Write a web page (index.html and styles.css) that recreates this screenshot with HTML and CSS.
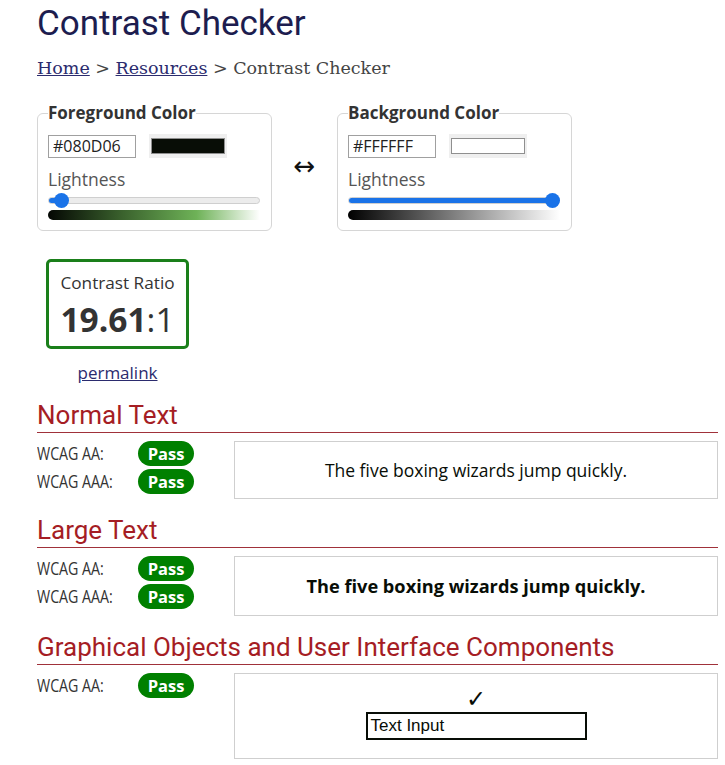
FILE: index.html
```html
<!DOCTYPE html>
<html lang="en">
<head>
<meta charset="utf-8">
<title>Contrast Checker</title>
<link rel="stylesheet" href="styles.css">
</head>
<body>
<main class="page">
  <h1 class="title">Contrast Checker</h1>
  <nav class="crumbs"><a href="#">Home</a> &gt; <a href="#">Resources</a> &gt; Contrast Checker</nav>

  <div class="pickers">
    <fieldset class="picker">
      <legend>Foreground Color</legend>
      <div class="hexrow">
        <input class="hex" type="text" value="#080D06">
        <span class="swatch-btn"><span class="swatch fg-swatch"></span></span>
      </div>
      <div class="light-label">Lightness</div>
      <div class="slider">
        <div class="track"><div class="fill" style="width: 13px"></div></div>
        <div class="thumb" style="left: 6px"></div>
      </div>
      <div class="grad fg-grad"></div>
    </fieldset>
    <div class="swap">&harr;</div>
    <fieldset class="picker">
      <legend>Background Color</legend>
      <div class="hexrow">
        <input class="hex" type="text" value="#FFFFFF">
        <span class="swatch-btn"><span class="swatch bg-swatch"></span></span>
      </div>
      <div class="light-label">Lightness</div>
      <div class="slider">
        <div class="track"><div class="fill" style="width: 100%"></div></div>
        <div class="thumb" style="left: 197px"></div>
      </div>
      <div class="grad bg-grad"></div>
    </fieldset>
  </div>

  <div class="ratio-col">
    <div class="ratio-box">
      <div class="ratio-label">Contrast Ratio</div>
      <div class="ratio-value"><b>19.61</b>:1</div>
    </div>
    <a class="permalink" href="#">permalink</a>
  </div>

  <section class="result">
    <h2>Normal Text</h2>
    <div class="result-row">
      <div class="levels">
        <div class="level"><span class="lvl-name">WCAG AA:</span><span class="pass">Pass</span></div>
        <div class="level"><span class="lvl-name">WCAG AAA:</span><span class="pass">Pass</span></div>
      </div>
      <div class="sample sample-normal">The five boxing wizards jump quickly.</div>
    </div>
  </section>

  <section class="result">
    <h2>Large Text</h2>
    <div class="result-row">
      <div class="levels">
        <div class="level"><span class="lvl-name">WCAG AA:</span><span class="pass">Pass</span></div>
        <div class="level"><span class="lvl-name">WCAG AAA:</span><span class="pass">Pass</span></div>
      </div>
      <div class="sample sample-large">The five boxing wizards jump quickly.</div>
    </div>
  </section>

  <section class="result">
    <h2>Graphical Objects and User Interface Components</h2>
    <div class="result-row">
      <div class="levels">
        <div class="level"><span class="lvl-name">WCAG AA:</span><span class="pass">Pass</span></div>
      </div>
      <div class="sample sample-ui">
        <div class="check">&#10003;</div>
        <div class="fake-input">Text Input</div>
      </div>
    </div>
  </section>
</main>
</body>
</html>
```

FILE: styles.css
```css
* { box-sizing: border-box; }

body {
  margin: 0;
  background: #ffffff;
  font-family: "Open Sans", "Liberation Sans", sans-serif;
  color: #333;
}

.page {
  padding: 0 7px 0 37px;
}

.title {
  margin: 0;
  padding-top: 4px;
  font-family: Roboto, "Liberation Sans", sans-serif;
  font-weight: 400;
  font-size: 35px;
  line-height: 40px;
  color: #1d1d4f;
}

.crumbs {
  margin-top: 13px;
  font-family: "DejaVu Serif", "Liberation Serif", serif;
  font-size: 17.5px;
  line-height: 22px;
  color: #444;
}
.crumbs a { color: #2b2b6e; }

.pickers {
  display: flex;
  align-items: center;
  margin-top: 22px;
}

.picker {
  width: 235px;
  margin: 0;
  padding: 9px 11px 10px 10px;
  border: 1px solid #d6d6d6;
  border-radius: 6px;
}
.picker legend {
  padding: 0;
  font-weight: 700;
  font-size: 17px;
  line-height: 24px;
  color: #333;
}

.hexrow {
  display: flex;
  align-items: center;
  gap: 13px;
}
.hex {
  width: 88px;
  height: 23px;
  margin: 0;
  padding: 0 4px;
  border: 1px solid #a0a0a0;
  font-family: "Open Sans", sans-serif;
  font-size: 16px;
  color: #222;
}
.swatch-btn {
  display: block;
  width: 78px;
  height: 24px;
  padding: 4px 2px;
  background: #efefef;
}
.swatch {
  display: block;
  width: 100%;
  height: 100%;
  border: 1px solid #8f8f8f;
}
.fg-swatch { background: #080D06; }
.bg-swatch { background: #FFFFFF; }

.light-label {
  margin-top: 9px;
  font-size: 17.5px;
  line-height: 24px;
  color: #555;
}

.slider {
  position: relative;
  height: 15px;
  margin-top: 2px;
}
.track {
  position: absolute;
  left: 0; right: 0; top: 4px;
  height: 7px;
  border-radius: 4px;
  background: #ececec;
  border: 1px solid #cfcfcf;
  overflow: hidden;
}
.fill {
  height: 100%;
  background: #1a73e8;
}
.thumb {
  position: absolute;
  top: 0;
  width: 15px;
  height: 15px;
  border-radius: 50%;
  background: #1a73e8;
}

.grad {
  height: 10px;
  margin-top: 2px;
  border-radius: 5px 0 0 5px;
}
.fg-grad {
  background: linear-gradient(to right, hsl(105, 37%, 2%), hsl(105, 37%, 28%) 35%, hsl(105, 37%, 52%) 70%, hsl(105, 37%, 100%));
}
.bg-grad {
  background: linear-gradient(to right, #000, #fff);
}

.swap {
  width: 65px;
  text-align: center;
  font-family: "DejaVu Sans", sans-serif;
  font-size: 26px;
  line-height: 30px;
  color: #111;
}

.ratio-col {
  width: 143px;
  margin: 28px 0 0 9px;
  text-align: center;
}
.ratio-box {
  height: 90px;
  border: 3px solid #1a7f1a;
  border-radius: 5px;
  padding-top: 10px;
}
.ratio-label {
  font-size: 17.2px;
  line-height: 22px;
  color: #333;
}
.ratio-value {
  margin-top: 4px;
  font-size: 33.5px;
  line-height: 42px;
  color: #333;
}
.ratio-value b { font-weight: 700; }

.permalink {
  display: inline-block;
  margin-top: 14px;
  font-size: 17px;
  line-height: 20px;
  color: #2b2b6e;
}

.result h2 {
  margin: 17px 0 8px;
  padding-bottom: 3px;
  font-family: Roboto, "Liberation Sans", sans-serif;
  font-weight: 400;
  font-size: 26px;
  line-height: 28px;
  color: #a51d24;
  border-bottom: 1px solid #a0313a;
}

.result-row {
  display: flex;
  align-items: flex-start;
}

.levels {
  width: 197px;
  margin-top: -2px;
}
.level {
  display: flex;
  align-items: center;
  height: 28px;
}
.lvl-name {
  display: inline-block;
  width: 101px;
  font-size: 18px;
  white-space: nowrap;
  transform: scaleX(0.79);
  transform-origin: left center;
  color: #333;
}
.pass {
  display: inline-block;
  width: 56px;
  height: 25px;
  border-radius: 13px;
  background: #008000;
  color: #fff;
  font-weight: 700;
  font-size: 16.5px;
  line-height: 25px;
  text-align: center;
}

.sample {
  flex: 1;
  border: 1px solid #cfcfcf;
  text-align: center;
  color: #080D06;
}
.sample-normal {
  height: 58px;
  font-size: 17.5px;
  line-height: 56px;
}
.sample-large {
  height: 60px;
  font-size: 18.2px;
  font-weight: 700;
  line-height: 58px;
}
.sample-ui {
  height: 86px;
  padding-top: 12px;
  display: flex;
  flex-direction: column;
  align-items: center;
}
.check {
  font-family: "DejaVu Sans", sans-serif;
  font-size: 24px;
  line-height: 26px;
  font-weight: 700;
  color: #080D06;
}
.fake-input {
  width: 221px;
  height: 28px;
  margin-top: 0;
  border: 2px solid #080D06;
  padding: 0 3px;
  text-align: left;
  font-family: "Liberation Sans", Arial, sans-serif;
  font-size: 17px;
  line-height: 24px;
  color: #080D06;
}
```
